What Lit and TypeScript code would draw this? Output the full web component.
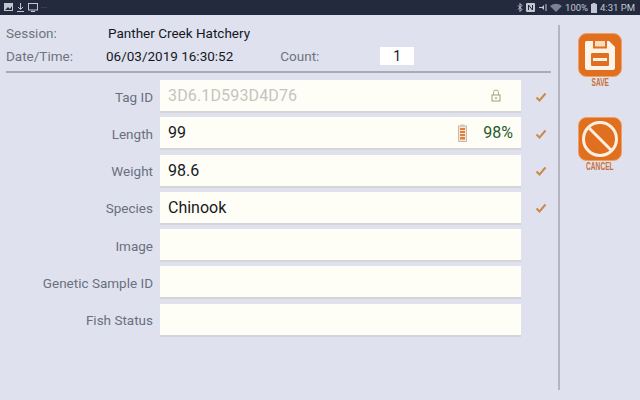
import { LitElement, html, css, svg } from "lit";
import { customElement } from "lit/decorators.js";

const check = html`<svg class="check" width="12" height="12" viewBox="0 0 12 12"><path d="M1.5 6.5 L4.5 9.5 L10.5 2.5" fill="none" stroke="#c98a4a" stroke-width="2"/></svg>`;
const lock = html`<svg width="10" height="13" viewBox="0 0 10 13"><path d="M2.5 6V3.5a2.5 2.5 0 0 1 5 0V6" fill="none" stroke="#a9ad8c" stroke-width="1"/><rect x="1" y="6" width="8" height="6" fill="none" stroke="#9aa07c" stroke-width="1"/><rect x="4.4" y="8" width="1.2" height="2" fill="#9aa07c"/></svg>`;
const battery = html`<svg width="9" height="18" viewBox="0 0 9 18"><rect x="2.5" y="0.5" width="4" height="2" fill="#d9c4ae"/><rect x="0.5" y="2" width="8" height="15.5" fill="#f3e6d6" stroke="#cdbba8"/><g fill="#e0803a"><rect x="2" y="4" width="5" height="2"/><rect x="2" y="7" width="5" height="2"/><rect x="2" y="10" width="5" height="2"/><rect x="2" y="13" width="5" height="2.5"/></g></svg>`;
const saveIcon = svg`<rect x="0.5" y="0.5" width="43" height="43" rx="8" fill="#e0701f" stroke="#f0a060"/><path d="M8.5 8H31L37 14V34.5Q37 37 34.5 37H9.5Q7 37 7 34.5V9.5Q7 8 8.5 8Z" fill="#fdf3e6"/><rect x="15" y="8" width="14" height="7.5" fill="#e0701f"/><rect x="17" y="8" width="10" height="5.5" fill="#f8dcc0"/><rect x="13" y="20" width="18" height="13" rx="1" fill="#e0701f"/><rect x="15" y="25" width="14" height="3" fill="#fdf3e6"/>`;
const cancelIcon = svg`<rect x="0.5" y="0.5" width="43" height="43" rx="8" fill="#e0701f" stroke="#f0a060"/><circle cx="22" cy="22" r="16.5" fill="none" stroke="#fdf0e0" stroke-width="3"/><path d="M10.5 10.5L33.5 33.5" stroke="#fdf0e0" stroke-width="3"/>`;

@customElement("app-root")
export class AppRoot extends LitElement {
  static styles = css`
    :host { display: block; width: 640px; height: 400px; overflow: hidden; background: #dfe2ee; font-family: Roboto, "Liberation Sans", sans-serif; }
    .status { height: 15px; background: #232a3e; display: flex; align-items: center; justify-content: space-between; padding: 0 5px 0 4px; color: #c3c7d2; font-size: 9.5px; }
    .st-group { display: flex; align-items: center; gap: 3px; }
    .dots { color: #6a7082; font-size: 8px; letter-spacing: 0; }
    .body { display: flex; height: 385px; }
    .main { width: 552px; flex: none; box-sizing: border-box; padding-top: 6px; }
    .head { margin-left: 6px; height: 52px; border-bottom: 2px solid #a8abb5; box-sizing: border-box; width: 545px; }
    .hrow { display: flex; align-items: center; height: 23px; color: #6f7280; font-size: 13.5px; }
    .hlabel { width: 100px; }
    .val { color: #15171f; font-size: 13.5px; }
    .count-label { margin-left: 47px; width: 100px; }
    .count { width: 34px; height: 18px; background: #fff; color: #15171f; text-align: center; line-height: 18px; font-size: 14px; }
    .rows { display: flex; flex-direction: column; gap: 4.3px; margin-top: 7px; }
    .row { display: flex; height: 33px; align-items: center; }
    .label { width: 153px; text-align: right; color: #6b6f7e; font-size: 13.5px; }
    .field { margin-left: 7px; width: 361px; height: 33px; box-sizing: border-box; background: #fffef6; border-bottom: 2px solid #d3d5d8; display: flex; align-items: center; padding: 0 8px; font-size: 16px; color: #17191d; }
    .grey { color: #c4c5c0; letter-spacing: 0.15px; }
    .spacer { flex: 1; }
    .pct { color: #1f5a2c; margin-left: 16px; }
    .lock-gap { width: 12px; flex: none; }
    .check-cell { width: 26px; display: flex; justify-content: flex-end; }
    .rule { width: 2px; height: 365px; background: #b3b6c0; margin: 10px 0 0 6px; flex: none; }
    .actions { flex: 1; display: flex; flex-direction: column; align-items: center; padding-top: 18px; gap: 29px; }
    .btn { display: flex; flex-direction: column; align-items: center; }
    .btn span { color: #c8703a; font-size: 10px; font-weight: 700; line-height: 11px; margin-top: 0; font-family: "Liberation Sans", sans-serif; transform: scaleX(0.66); }
  `;

  render() {
    const rows: [string, unknown][] = [
      ["Tag ID", html`<span class="grey">3D6.1D593D4D76</span><span class="spacer"></span>${lock}<span class="lock-gap"></span>`],
      ["Length", html`99<span class="spacer"></span>${battery}<span class="pct">98%</span>`],
      ["Weight", "98.6"],
      ["Species", "Chinook"],
      ["Image", ""],
      ["Genetic Sample ID", ""],
      ["Fish Status", ""],
    ];
    return html`
      <div class="status">
        <div class="st-group">
          <svg width="9" height="9" viewBox="0 0 9 9"><rect width="9" height="8" fill="#c3c7d2"/><path d="M1 7L4 4L6 6L8 3V7Z" fill="#232a3e"/></svg>
          <svg width="9" height="9" viewBox="0 0 9 9"><path d="M4.5 0V6M2 4L4.5 6.5L7 4M1 8.5H8" stroke="#c3c7d2" fill="none"/></svg>
          <svg width="10" height="9" viewBox="0 0 10 9"><rect x=".5" y=".5" width="9" height="6.5" fill="none" stroke="#c3c7d2"/><path d="M3 8.5H7" stroke="#c3c7d2"/></svg>
          <span class="dots">···</span>
        </div>
        <div class="st-group">
          <svg width="6" height="9" viewBox="0 0 6 9"><path d="M1 2.5L5 6.5L3 8.5V.5L5 2.5L1 6.5" fill="none" stroke="#c3c7d2"/></svg>
          <svg width="9" height="9" viewBox="0 0 9 9"><rect width="9" height="9" rx="1" fill="#c3c7d2"/><path d="M2.5 7V2L6.5 7V2" stroke="#232a3e" fill="none"/></svg>
          <svg width="9" height="9" viewBox="0 0 9 9"><path d="M1 4H4L6 2V7L4 5H1Z" fill="#c3c7d2"/><path d="M8 1V8" stroke="#c3c7d2"/></svg>
          <svg width="12" height="9" viewBox="0 0 12 9"><path d="M0 3Q6 -1.5 12 3L6 9Z" fill="#7d8292"/></svg>
          <span>100%</span>
          <svg width="6" height="10" viewBox="0 0 6 10"><rect x="1.5" width="3" height="1" fill="#c3c7d2"/><rect y="1" width="6" height="9" fill="#c3c7d2"/></svg>
          <span>4:31 PM</span>
        </div>
      </div>
      <div class="body">
        <div class="main">
          <div class="head">
            <div class="hrow"><div class="hlabel">Session:</div><div class="val" style="margin-left:2px">Panther Creek Hatchery</div></div>
            <div class="hrow"><div class="hlabel">Date/Time:</div><div class="val">06/03/2019 16:30:52</div><div class="count-label">Count:</div><div class="count">1</div></div>
          </div>
          <div class="rows">
            ${rows.map(([l, c], i) => html`<div class="row"><div class="label">${l}</div><div class="field">${c}</div>${i < 4 ? html`<div class="check-cell">${check}</div>` : ""}</div>`)}
          </div>
        </div>
        <div class="rule"></div>
        <div class="actions">
          <div class="btn"><svg width="44" height="44" viewBox="0 0 44 44">${saveIcon}</svg><span>SAVE</span></div>
          <div class="btn"><svg width="44" height="44" viewBox="0 0 44 44">${cancelIcon}</svg><span>CANCEL</span></div>
        </div>
      </div>
    `;
  }
}
